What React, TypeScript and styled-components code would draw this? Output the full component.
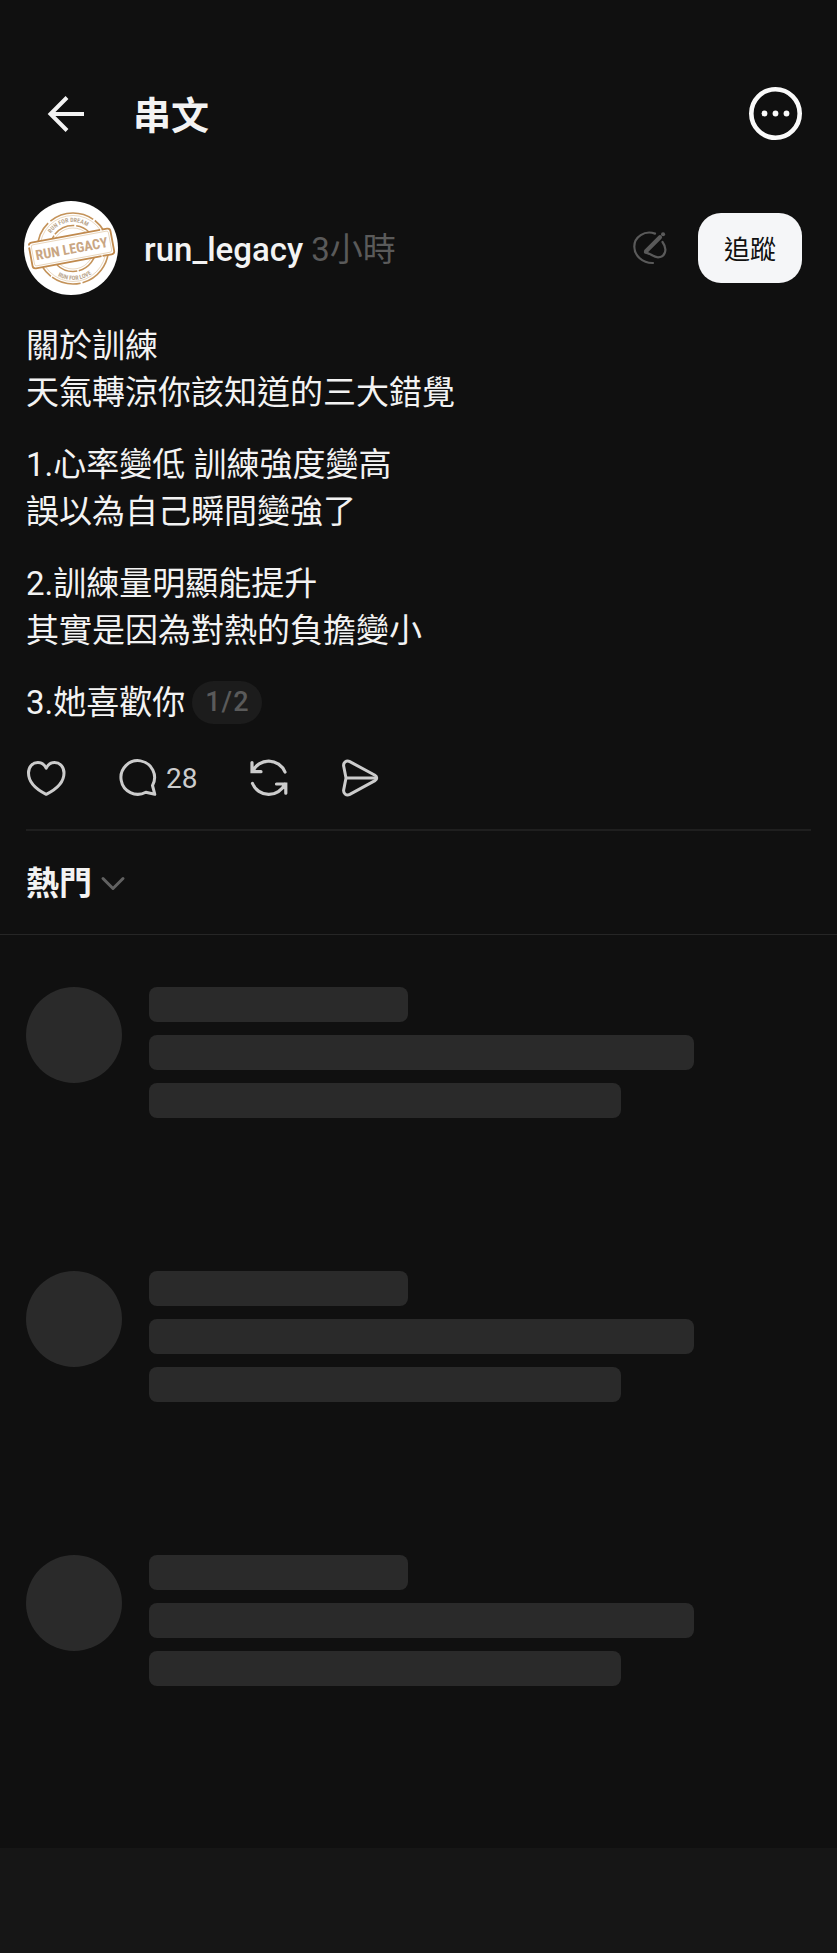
import React from "react";
import styled, { createGlobalStyle } from "styled-components";

const GlobalStyle = createGlobalStyle`
  *, *::before, *::after { box-sizing: border-box; }
  body {
    margin: 0;
    background: #101010;
    color: #f3f3f3;
    font-family: Roboto, "Noto Sans CJK TC", sans-serif;
  }
  button {
    margin: 0;
    padding: 0;
    border: 0;
    background: none;
    color: inherit;
    font: inherit;
    cursor: pointer;
  }
  svg { display: block; flex: none; }
`;

const Page = styled.div`
  display: flex;
  flex-direction: column;
  min-height: 100vh;
`;

const Header = styled.header`
  display: flex;
  align-items: center;
  gap: 44px;
  padding: 87px 35px 0 45px;
`;

const Title = styled.h1`
  flex: 1;
  margin: 0;
  padding-top: 5px;
  font-size: 38px;
  line-height: 48px;
  font-weight: 700;
`;

const IconButton = styled.button`
  display: flex;
  align-items: center;
`;

const Post = styled.article`
  margin: 0 26px;
  padding-top: 61px;
  padding-bottom: 32px;
  border-bottom: 2px solid #1f1f1f;
`;

const Author = styled.div`
  display: flex;
  align-items: center;
  margin: 0 9px 27px -2px;
`;

const Byline = styled.div`
  flex: 1;
  display: flex;
  align-items: baseline;
  gap: 8px;
  margin-left: 26px;
  padding-top: 3px;
  font-size: 33px;
  line-height: 47px;
`;

const Username = styled.a`
  color: #f3f3f3;
  font-weight: 500;
  text-decoration: none;
`;

const Time = styled.time`
  color: #5a5a5a;
`;

const FollowButton = styled.button`
  height: 70px;
  margin-left: 31px;
  padding: 0 26px 2px;
  border-radius: 23px;
  background: #f5f6f8;
  color: #101010;
  font-size: 26px;
`;

const Body = styled.div`
  display: flex;
  flex-direction: column;
  gap: 25px;
  font-size: 33px;
  line-height: 47px;
`;

const Paragraph = styled.p`
  margin: 0;
`;

const LastLine = styled.div`
  display: flex;
  align-items: center;
  gap: 7px;
`;

const PageBadge = styled.span`
  padding: 0 13px;
  border-radius: 22px;
  background: #1c1c1c;
  color: #5a5a5a;
  font-size: 27px;
  line-height: 43px;
  font-weight: 500;
  letter-spacing: 1px;
`;

const Actions = styled.div`
  display: flex;
  align-items: center;
  gap: 53px;
  margin-top: 33px;
  color: #cccccc;
`;

const Action = styled.button`
  display: flex;
  align-items: center;
  gap: 9px;
  height: 38px;
  font-size: 28px;
`;

const SortBar = styled.div`
  display: flex;
  align-items: center;
  height: 104px;
  padding: 2px 26px 0;
  border-bottom: 1px solid #262626;
`;

const SortButton = styled.button`
  display: flex;
  align-items: center;
  gap: 8px;
  font-size: 33px;
  line-height: 47px;
  font-weight: 700;
`;

const Replies = styled.main`
  flex: 1;
  display: flex;
  flex-direction: column;
  gap: 153px;
  padding: 52px 23px 52px 26px;
`;

const Skeleton = styled.div`
  display: flex;
  align-items: flex-start;
  gap: 27px;
`;

const SkeletonAvatar = styled.div`
  flex: none;
  width: 96px;
  height: 96px;
  border-radius: 50%;
  background: #2a2a2a;
`;

const SkeletonLines = styled.div`
  flex: 1;
  display: flex;
  flex-direction: column;
  gap: 13px;
`;

const SkeletonBar = styled.div<{ $width: number }>`
  width: ${(p) => p.$width}%;
  height: 35px;
  border-radius: 8px;
  background: #2a2a2a;
`;

const BottomBar = styled.footer`
  height: 105px;
  background: #161616;
`;

const AvatarArt = () => (
  <svg width="94" height="94" viewBox="0 0 94 94" role="img" aria-label="run_legacy">
    <defs>
      <path id="arc-top" d="M22 47.500 A26.500 26.500 0 0 1 75 47.500" />
      <path id="arc-bottom" d="M17.500 47.500 A31.500 31.500 0 0 0 80.500 47.500" />
    </defs>
    <circle cx="47" cy="47" r="47" fill="#fff" />
    <g fill="none" stroke="#c4935a">
      <circle cx="49" cy="47.500" r="35.500" strokeWidth="1.600" strokeDasharray="46 2 30 1.500 60 3" />
      <circle cx="49" cy="47.500" r="33" strokeWidth="0.600" stroke="#dcbf98" />
      <circle cx="49" cy="47.500" r="23" strokeWidth="1.500" strokeDasharray="30 1.500 22 2" />
      <circle cx="49" cy="47.500" r="20.500" strokeWidth="0.600" stroke="#dcbf98" />
    </g>
    <g fill="#b9a58c" fontFamily='"Liberation Sans Narrow", "Roboto Condensed", Roboto, sans-serif' fontSize="6" fontWeight="700" textAnchor="middle">
      <text><textPath href="#arc-top" startOffset="44%">RUN FOR DREAM</textPath></text>
      <text><textPath href="#arc-bottom" startOffset="52%">RUN FOR LOVE</textPath></text>
    </g>
    <g transform="rotate(-10.500 47.500 47.500)">
      <rect x="6" y="34.500" width="83" height="26" rx="3" fill="#fff" stroke="#c08a4e" strokeWidth="1.800" strokeDasharray="70 1.500 44 1 90 2" />
      <rect x="8.300" y="36.800" width="78.400" height="21.400" rx="2" fill="none" stroke="#dcbf98" strokeWidth="0.600" />
      <text x="47.500" y="52.700" textAnchor="middle" fontFamily='"Liberation Sans Narrow", "Roboto Condensed", Roboto, sans-serif' fontSize="14" fontWeight="700" fill="#c9a683">RUN LEGACY</text>
    </g>
  </svg>
);

const BackIcon = () => (
  <svg width="44" height="44" viewBox="0 0 44 44" fill="none" stroke="#f3f3f3" strokeWidth="4">
    <path d="M39 22H6M22 5.500L5.500 22L22 38.500" />
  </svg>
);

const MoreIcon = () => (
  <svg width="53" height="53" viewBox="0 0 53 53" fill="none">
    <circle cx="26.500" cy="26.500" r="24.200" stroke="#fafafa" strokeWidth="4.600" />
    <g fill="#fafafa">
      <circle cx="15.500" cy="26.500" r="2.900" />
      <circle cx="26.500" cy="26.500" r="2.900" />
      <circle cx="37.500" cy="26.500" r="2.900" />
    </g>
  </svg>
);

const ComposeIcon = () => (
  <svg width="34" height="34" viewBox="0 0 34 34" fill="none" stroke="#5a5a5a" strokeWidth="2.200" strokeLinecap="round" strokeLinejoin="round">
    <path d="M22 2.600C11.500-1.200 1.300 6.200 1.300 15.500C1.300 24.500 9.500 32.300 20 32" />
    <path d="M29.500 11C35 18.500 32 26.300 25 26.300C20 26.300 18 22.300 12 21.300" />
    <path d="M13 20.300L27 6.200" strokeWidth="4.200" />
    <path d="M30 3.300H30.100" strokeWidth="4" />
  </svg>
);

const HeartIcon = () => (
  <svg width="40" height="38" viewBox="0 0 40 38" fill="none" stroke="currentColor" strokeWidth="3" strokeLinejoin="round">
    <path d="M20.200 9.200C18.500 5.300 15.200 3.600 11.800 3.600C6.400 3.600 2.500 8 2.500 14C2.500 23 10.500 30.500 20.200 35.300C30 30.500 38 23 38 14C38 8 34 3.600 28.600 3.600C25.200 3.600 21.900 5.300 20.200 9.200Z" />
  </svg>
);

const CommentIcon = () => (
  <svg width="38" height="38" viewBox="0 0 38 38" fill="none" stroke="currentColor" strokeWidth="3" strokeLinejoin="round">
    <path d="M33.500 26.500A16.800 16.800 0 1 0 26.800 33.200L35.800 35.300Z" />
  </svg>
);

const RepostIcon = () => (
  <svg width="38" height="38" viewBox="0 0 38 38" fill="none" stroke="currentColor" strokeWidth="3.200" strokeLinecap="round">
    <path d="M35 13A17.700 17.700 0 0 0 2.500 12.500M2 3.500V12.700H11" />
    <path d="M2.500 24.500A17.700 17.700 0 0 0 35 25M35.800 34.200V25H26.500" />
  </svg>
);

const SendIcon = () => (
  <svg width="38" height="38" viewBox="0 0 38 38" fill="none" stroke="currentColor" strokeWidth="3" strokeLinejoin="round">
    <path d="M8.800 2.600L34 16.300C36.300 17.500 36.300 20.500 34 21.700L8.800 35.400C5.300 37.200 2 34.300 2.700 30.700L5 19L2.700 7.300C2 3.700 5.300.8 8.800 2.600Z" />
    <path d="M5 19H35" />
  </svg>
);

const ChevronIcon = () => (
  <svg width="26" height="16" viewBox="0 0 26 16" fill="none" stroke="#616161" strokeWidth="3" strokeLinecap="round" strokeLinejoin="round">
    <path d="M3 2.500L13 12.500L23 2.500" />
  </svg>
);

const REPLY_PLACEHOLDERS = [0, 1, 2];
const LINE_WIDTHS = [39, 82, 71];

export default function App() {
  return (
    <Page>
      <GlobalStyle />
      <Header>
        <IconButton type="button" aria-label="返回"><BackIcon /></IconButton>
        <Title>串文</Title>
        <IconButton type="button" aria-label="更多"><MoreIcon /></IconButton>
      </Header>

      <Post>
        <Author>
          <AvatarArt />
          <Byline>
            <Username href="#run_legacy">run_legacy</Username>
            <Time>3小時</Time>
          </Byline>
          <IconButton type="button" aria-label="撰寫"><ComposeIcon /></IconButton>
          <FollowButton type="button">追蹤</FollowButton>
        </Author>

        <Body>
          <Paragraph>關於訓練<br />天氣轉涼你該知道的三大錯覺</Paragraph>
          <Paragraph>1.心率變低 訓練強度變高<br />誤以為自己瞬間變強了</Paragraph>
          <Paragraph>2.訓練量明顯能提升<br />其實是因為對熱的負擔變小</Paragraph>
          <LastLine>
            <Paragraph>3.她喜歡你</Paragraph>
            <PageBadge>1/2</PageBadge>
          </LastLine>
        </Body>

        <Actions>
          <Action type="button" aria-label="讚"><HeartIcon /></Action>
          <Action type="button" aria-label="回覆"><CommentIcon />28</Action>
          <Action type="button" aria-label="轉發"><RepostIcon /></Action>
          <Action type="button" aria-label="分享"><SendIcon /></Action>
        </Actions>
      </Post>

      <SortBar>
        <SortButton type="button">熱門<ChevronIcon /></SortButton>
      </SortBar>

      <Replies aria-busy="true">
        {REPLY_PLACEHOLDERS.map((id) => (
          <Skeleton key={id}>
            <SkeletonAvatar />
            <SkeletonLines>
              {LINE_WIDTHS.map((width) => (
                <SkeletonBar key={width} $width={width} />
              ))}
            </SkeletonLines>
          </Skeleton>
        ))}
      </Replies>
      <BottomBar />
    </Page>
  );
}
